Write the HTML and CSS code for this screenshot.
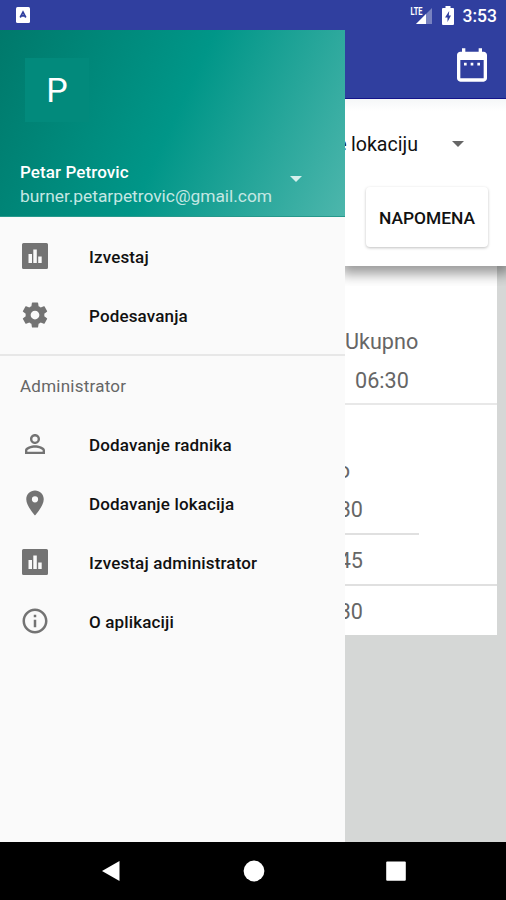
FILE: index.html
```html
<!DOCTYPE html>
<html lang="sr">
<head>
<meta charset="utf-8">
<title>Izvestaj</title>
<link rel="stylesheet" href="styles.css">
</head>
<body>
<header class="status">
  <svg class="app-badge" viewBox="0 0 14 16"><rect width="14" height="16" rx="1.500" fill="#fff"/><path d="M4.200 10.500 7 5l2.800 5.500M5.500 8.800h3" fill="none" stroke="#303f9f" stroke-width="1.700"/></svg>
  <div class="status-right">
    <svg class="signal" viewBox="0 0 23 19"><path d="M6 18 22 2v16z" fill="#fff" opacity=".35"/><path d="M6 18 16 8v10z" fill="#fff"/><text x="0.500" y="8.500" textLength="12" lengthAdjust="spacingAndGlyphs">LTE</text></svg>
    <svg class="battery" viewBox="0 0 12 19"><path d="M3.500 2V0h5v2H11q1 0 1 1v15q0 1-1 1H1q-1 0-1-1V3q0-1 1-1z" fill="#fff"/><path d="M7.200 5 3 11.500h2.500V16L9 9.500H6.800z" fill="#303f9f"/></svg>
    <span class="clock">3:53</span>
  </div>
</header>
<main class="screen">
  <nav class="drawer">
    <div class="profile">
      <div class="avatar">P</div>
      <div class="account">
        <div>
          <div class="name">Petar Petrovic</div>
          <div class="email">burner.petarpetrovic@gmail.com</div>
        </div>
        <svg class="caret" viewBox="0 0 12 6"><path d="M0 0h12L6 6z"/></svg>
      </div>
    </div>
    <ul class="menu">
      <li><svg viewBox="0 0 30 30"><path fill-rule="evenodd" d="M3.500 2h23q1.500 0 1.500 1.500v23q0 1.500-1.500 1.500h-23Q2 28 2 26.500v-23Q2 2 3.500 2zM8.500 13v9H12v-9zM13.300 8.500V22h3.500V8.500zM18.200 15.500V22h3.500v-6.500z"/></svg><span>Izvestaj</span></li>
      <li><svg viewBox="0 0 24 24"><path d="M19.430 12.980c.04-.32.07-.64.07-.98s-.03-.66-.07-.98l2.110-1.650c.19-.15.24-.42.12-.64l-2-3.460c-.12-.22-.39-.3-.61-.22l-2.490 1c-.52-.4-1.080-.73-1.690-.98l-.38-2.650C14.460 2.180 14.250 2 14 2h-4c-.25 0-.46.18-.49.42l-.38 2.650c-.61.25-1.170.59-1.690.98l-2.490-1c-.23-.09-.49 0-.61.22l-2 3.460c-.13.22-.07.49.12.64l2.110 1.650c-.04.32-.07.65-.07.98s.03.66.07.98l-2.110 1.650c-.19.15-.24.42-.12.64l2 3.460c.12.22.39.3.61.22l2.490-1c.52.4 1.080.73 1.690.98l.38 2.650c.03.24.24.42.49.42h4c.25 0 .46-.18.49-.42l.38-2.650c.61-.25 1.170-.59 1.690-.98l2.490 1c.23.09.49 0 .61-.22l2-3.460c.12-.22.07-.49-.12-.64l-2.110-1.650zM12 15.500c-1.930 0-3.500-1.570-3.500-3.500s1.570-3.500 3.500-3.500 3.500 1.570 3.500 3.500-1.570 3.500-3.500 3.500z"/></svg><span>Podesavanja</span></li>
    </ul>
    <h2 class="section">Administrator</h2>
    <ul class="menu admin">
      <li><svg viewBox="0 0 24 24"><path d="M12 5.900a2.100 2.100 0 1 1 0 4.200 2.100 2.100 0 0 1 0-4.200m0 9c2.970 0 6.100 1.460 6.100 2.100v1.100H5.900V17c0-.64 3.130-2.100 6.100-2.100M12 4C9.790 4 8 5.790 8 8s1.790 4 4 4 4-1.790 4-4-1.790-4-4-4zm0 9c-2.670 0-8 1.340-8 4v3h16v-3c0-2.660-5.330-4-8-4z"/></svg><span>Dodavanje radnika</span></li>
      <li><svg viewBox="0 0 24 24"><path d="M12 2C8.130 2 5 5.130 5 9c0 5.250 7 13 7 13s7-7.750 7-13c0-3.870-3.130-7-7-7zm0 9.500a2.500 2.500 0 1 1 0-5 2.500 2.500 0 0 1 0 5z"/></svg><span>Dodavanje lokacija</span></li>
      <li><svg viewBox="0 0 30 30"><path fill-rule="evenodd" d="M3.500 2h23q1.500 0 1.500 1.500v23q0 1.500-1.500 1.500h-23Q2 28 2 26.500v-23Q2 2 3.500 2zM8.500 13v9H12v-9zM13.300 8.500V22h3.500V8.500zM18.200 15.500V22h3.500v-6.500z"/></svg><span>Izvestaj administrator</span></li>
      <li><svg viewBox="0 0 24 24"><path d="M11 17h2v-6h-2v6zm1-15C6.480 2 2 6.480 2 12s4.480 10 10 10 10-4.480 10-10S17.520 2 12 2zm0 18c-4.410 0-8-3.590-8-8s3.590-8 8-8 8 3.590 8 8-3.590 8-8 8zM11 9h2V7h-2v2z"/></svg><span>O aplikaciji</span></li>
    </ul>
  </nav>
  <section class="page">
    <div class="appbar"><svg viewBox="0 0 24 24"><path d="M8.800 10.700H7.200v1.600h1.600zm4 0h-1.600v1.600h1.600zm4 0h-1.600v1.600h1.600zM19 4h-1V2h-2v2H8V2H6v2H5c-1.110 0-1.990.9-1.990 2L3 20c0 1.100.89 2 2 2h14c1.100 0 2-.9 2-2V6c0-1.100-.9-2-2-2zm0 16H5V9h14v11z"/></svg></div>
    <div class="filter">
      <div class="select"><span>e lokaciju</span><svg viewBox="0 0 12 6"><path d="M0 0h12L6 6z"/></svg></div>
      <button class="note">NAPOMENA</button>
    </div>
    <div class="sheet">
      <div class="total"><div class="label">Ukupno</div><div class="hours">06:30</div></div>
      <div class="day">
        <div class="cell partial">o</div>
        <div class="cell time first">30</div>
        <div class="cell time">45</div>
        <div class="cell time last">30</div>
      </div>
    </div>
  </section>
</main>
<footer class="navbar">
  <svg viewBox="0 0 22 22"><path d="M2 11 19.500 1v20z"/></svg>
  <svg viewBox="0 0 22 22"><circle cx="11" cy="11" r="10.400"/></svg>
  <svg viewBox="0 0 22 22"><rect x="1.200" y="1.500" width="19.600" height="19.300" rx="1"/></svg>
</footer>
</body>
</html>
```
FILE: styles.css
```css
* { box-sizing: border-box; }
body {
  margin: 0;
  width: 506px;
  height: 900px;
  overflow: hidden;
  display: flex;
  flex-direction: column;
  font-family: Roboto, "Liberation Sans", sans-serif;
  color: #111;
  background: #000;
}
svg { display: block; flex: none; }
ul { list-style: none; margin: 0; padding: 0; }

.status {
  height: 30px;
  flex: none;
  display: flex;
  align-items: center;
  justify-content: space-between;
  padding: 0 9px 0 16px;
  background: #303f9f;
  color: #fff;
}
.app-badge { width: 14px; height: 16px; }
.status-right { display: flex; align-items: center; }
.signal { width: 23px; height: 19px; margin-right: 9px; }
.signal text { font-size: 10px; font-weight: 700; fill: #fff; }
.battery { width: 12px; height: 19px; margin-right: 9px; }
.clock { font-size: 17.5px; font-weight: 500; line-height: 30px; padding-top: 2px; }

.screen { height: 812px; flex: none; display: flex; }

.drawer { width: 345px; flex: none; background: #fafafa; }
.profile {
  height: 187px;
  padding: 28px 0 0 20px;
  background: linear-gradient(115deg, #00796b 0%, #009688 50%, #4db6ac 100%);
  border-bottom: 1px solid #26998c;
  color: #fff;
}
.avatar {
  width: 64px;
  height: 64px;
  margin-left: 5px;
  background: #028a7c;
  font-size: 34px;
  line-height: 65px;
  text-align: center;
}
.account { display: flex; margin-top: 38px; }
.name { font-size: 17px; font-weight: 500; line-height: 24px; letter-spacing: .1px; }
.email { width: 254px; font-size: 17.4px; line-height: 25px; letter-spacing: -.03px; color: #c4e7e3; white-space: nowrap; }
.caret { width: 12px; height: 6px; margin: 16px 0 0 16px; fill: #d5f0ed; }

.menu { padding-top: 9px; }
.menu li { height: 59px; display: flex; align-items: center; padding-left: 20px; }
.menu svg { width: 30px; height: 30px; margin-right: 39px; fill: #737373; }
.menu span { padding-top: 2px; font-size: 17px; font-weight: 500; line-height: 24px; letter-spacing: .15px; }
.section {
  margin: 10px 0 0;
  border-top: 2px solid #e7e7e7;
  height: 60px;
  padding-left: 20px;
  font-size: 17px;
  font-weight: 400;
  line-height: 61px;
  letter-spacing: .24px;
  color: #666;
}
.menu.admin { padding-top: 0; }

.page { width: 161px; flex: none; overflow: hidden; background: #d5d7d6; }
.appbar {
  height: 69px;
  display: flex;
  justify-content: flex-end;
  padding: 15px 14px 0 0;
  background: #303f9f;
  border-bottom: 1px solid #14148a;
}
.appbar svg { width: 40px; height: 40px; fill: #fff; }
.filter {
  height: 167px;
  position: relative;
  background: linear-gradient(#f5f7f8, #fff 12px);
  box-shadow: 0 4px 12px 4px rgba(0, 0, 0, .4);
  clip-path: inset(0 0 -20px 0);
  padding-top: 30px;
}
.select { display: flex; justify-content: flex-end; align-items: center; padding-right: 42px; height: 30px; }
.select span { font-size: 19.6px; word-spacing: -.5px; white-space: nowrap; }
.select svg { width: 12px; height: 6px; margin-left: 34px; fill: #666; }
.note {
  display: block;
  width: 122px;
  height: 60px;
  margin: 28px 0 0 21px;
  padding: 0;
  border: 0;
  border-radius: 4px;
  background: #fff;
  box-shadow: 0 1px 3px rgba(0, 0, 0, .25);
  font: 500 17.4px/62px Roboto, sans-serif;
  color: #111;
}
.sheet { width: 152px; height: 369px; background: #fff; color: #666; font-size: 21.6px; }
.total { height: 139px; padding-top: 55px; border-bottom: 2px solid #e8e8e8; }
.label { line-height: 41px; height: 40px; }
.hours { line-height: 40px; padding-left: 10px; }
.cell { display: flex; justify-content: flex-end; }
.partial { width: 5px; height: 85px; line-height: 28px; padding-top: 52px; }
.time { height: 51px; line-height: 52px; border-bottom: 2px solid #e0e0e0; padding-right: 134px; }
.first { width: 74px; height: 45px; line-height: 40px; padding-right: 56px; }
.last { border: 0; }

.navbar {
  height: 58px;
  flex: none;
  display: flex;
  align-items: center;
  justify-content: space-between;
  padding: 0 99px 0 100px;
  background: #000;
}
.navbar svg { width: 22px; height: 22px; fill: #fff; }
```
